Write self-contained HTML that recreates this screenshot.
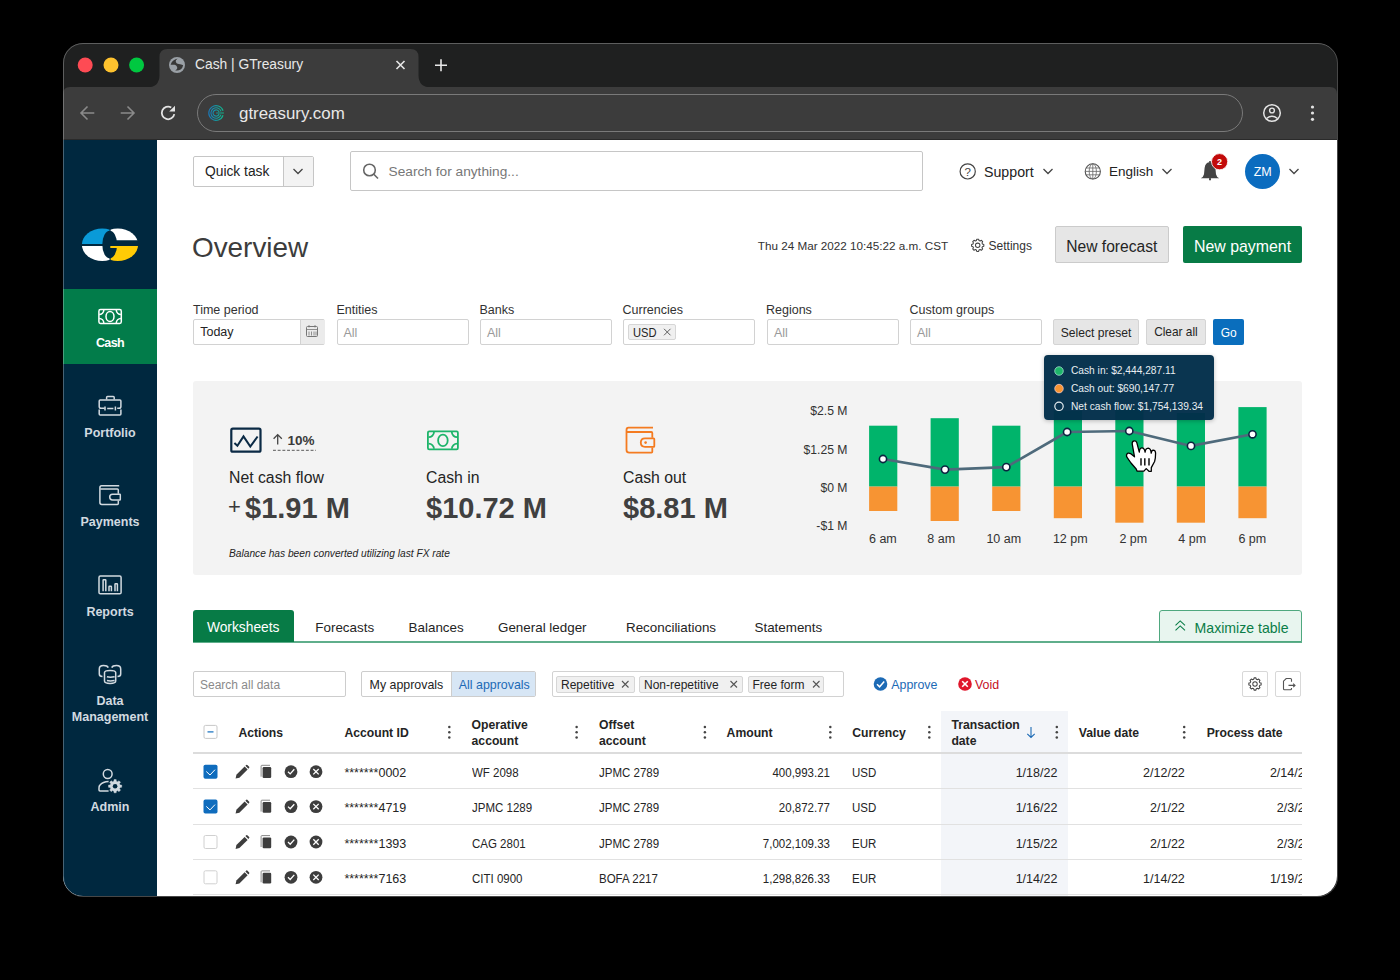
<!DOCTYPE html>
<html><head><meta charset="utf-8">
<style>
*{margin:0;padding:0;box-sizing:border-box}
html,body{width:1400px;height:980px;background:#000;overflow:hidden;font-family:"Liberation Sans",sans-serif}
.a{position:absolute}
.t{position:absolute;white-space:nowrap;line-height:1}
#win{position:absolute;left:0;top:0;width:1400px;height:980px;clip-path:inset(43px 63px 84px 63px round 20px);background:#1f2020}
svg{position:absolute;overflow:visible}
</style></head><body>
<div id="win">
  <!-- tab bar -->
  <div class="a" style="left:63px;top:43px;width:1274px;height:44px;background:#1f2020"></div>
  <!-- active tab -->
  <svg style="left:0;top:0" width="1400" height="140" viewBox="0 0 1400 140">
    <path d="M146.5 87.5 Q159.5 87.5 159.5 75 V57 Q159.5 49 167.5 49 H410.5 Q418.5 49 418.5 57 V75 Q418.5 87.5 431.5 87.5 Z" fill="#3c3c3c"/>
    <!-- toolbar -->
    <path d="M63 94 Q63 87 70 87 H1330 Q1337 87 1337 94 V140 H63 Z" fill="#3c3c3c"/>
    <!-- traffic -->
    <circle cx="85.2" cy="65" r="7.5" fill="#fe4b54"/>
    <circle cx="111" cy="65" r="7.5" fill="#fec22e"/>
    <circle cx="136.6" cy="65" r="7.5" fill="#00c840"/>
    <!-- globe -->
    <circle cx="177" cy="65" r="8" fill="#9aa0a6"/>
    <path transform="translate(177 65) scale(1.12) translate(-177 -65)" d="M171.3 64.7 Q172.5 60.5 177.5 59.3 Q175.5 60.8 175.9 62.3 Q176.6 64 178.6 64.2 Q181 64.5 182.5 65.3 Q182 68 180.2 69 Q178 70.3 175.4 69.8 Q177.8 68.5 177.2 66.9 Q176.5 64.9 174.9 64.7 Z" fill="#383838"/>
    <!-- tab close -->
    <path d="M396.5 61 L404.5 69 M404.5 61 L396.5 69" stroke="#e8e8e8" stroke-width="1.6"/>
    <!-- plus -->
    <path d="M435 65.3 H447 M441 59.3 V71.3" stroke="#e8e8e8" stroke-width="1.6"/>
    <!-- back/fwd -->
    <path d="M94.3 113 H81 M87.5 106.5 L81 113 L87.5 119.5" stroke="#8a8a8a" stroke-width="1.6" fill="none"/>
    <path d="M120.7 113 H134 M127.5 106.5 L134 113 L127.5 119.5" stroke="#8a8a8a" stroke-width="1.6" fill="none"/>
    <!-- reload -->
    <path d="M174.3 114.1 A6.3 6.3 0 1 1 171.25 107.5" stroke="#e3e3e3" stroke-width="1.8" fill="none"/>
    <path d="M175 105.8 V111.6 H169.2 Z" fill="#e3e3e3"/>
    <!-- address bar -->
    <rect x="197.5" y="94.5" width="1045" height="37" rx="18.5" fill="#3c3c3c" stroke="#7a7a7a" stroke-width="1"/>
    <!-- favicon -->
    <defs><linearGradient id="fg" x1="0" x2="1" y1="0" y2="0"><stop offset="0" stop-color="#1a78b8"/><stop offset="1" stop-color="#10b98a"/></linearGradient></defs>
    <path d="M223.04 115.26 A7.3 7.3 0 1 1 223.04 110.74 M221.05 114.61 A5.2 5.2 0 1 1 221.05 111.39 M219.05 113.96 A3.1 3.1 0 1 1 219.05 112.04 M216.1 113 H223.9" stroke="url(#fg)" stroke-width="1.15" fill="none"/>
    <!-- profile -->
    <circle cx="1272" cy="113" r="8.3" stroke="#e3e3e3" stroke-width="1.5" fill="none"/>
    <circle cx="1272" cy="110.5" r="2.4" stroke="#e3e3e3" stroke-width="1.4" fill="none"/>
    <path d="M1266.5 118.5 Q1272 114 1277.5 118.5" stroke="#e3e3e3" stroke-width="1.4" fill="none"/>
    <!-- kebab -->
    <circle cx="1312.5" cy="107" r="1.6" fill="#e3e3e3"/>
    <circle cx="1312.5" cy="113" r="1.6" fill="#e3e3e3"/>
    <circle cx="1312.5" cy="119.3" r="1.6" fill="#e3e3e3"/>
  </svg>
  <div class="t" style="left:195px;top:58px;font-size:13.8px;color:#e8e8e8">Cash | GTreasury</div>
  <div class="t" style="left:239px;top:105.5px;font-size:16.9px;color:#e8e8e8">gtreasury.com</div>
  <div class="a" style="left:63px;top:139px;width:1274px;height:1px;background:#2a2a2a"></div>

  <div class="a" style="left:63px;top:140px;width:1274px;height:756px;background:#fff"></div>
  <!-- sidebar -->
  <div class="a" style="left:63px;top:140px;width:94px;height:756px;background:#00283f"></div>
  <div class="a" style="left:63px;top:289px;width:94px;height:75px;background:#027c4a"></div>


  <svg style="left:0;top:0" width="160" height="900" viewBox="0 0 160 900">
    <!-- logo -->
    <defs>
      <clipPath id="lgL"><rect x="70" y="220" width="39.6" height="24"/></clipPath>
      <clipPath id="lgL2"><rect x="70" y="246" width="39.6" height="24"/></clipPath>
      <clipPath id="lgR"><rect x="110.6" y="220" width="40" height="20.2"/></clipPath>
      <clipPath id="lgR2"><rect x="110.6" y="246" width="40" height="24"/></clipPath>
    </defs>
    <ellipse cx="102.2" cy="244.7" rx="20.3" ry="16.2" fill="#0a9ad8" clip-path="url(#lgL)"/>
    <ellipse cx="102.2" cy="244.7" rx="20.3" ry="16.2" fill="#ffffff" clip-path="url(#lgL2)"/>
    <ellipse cx="117.8" cy="244.7" rx="20.3" ry="16.2" fill="#ffffff" clip-path="url(#lgR)"/>
    <ellipse cx="117.8" cy="244.7" rx="20.3" ry="16.2" fill="#ffcb05" clip-path="url(#lgR2)"/>
    <ellipse cx="109.7" cy="244.6" rx="7.4" ry="13.8" fill="#00283f"/>
    <path d="M110.3 245.9 H118.5 L117.6 248 H110.3 Z" fill="#ffcb05"/>
    <g stroke="#fff" stroke-width="1.5" fill="none">
      <!-- cash -->
      <rect x="98.9" y="309.6" width="22.4" height="13.8" rx="1.6"/>
      <ellipse cx="110" cy="316.5" rx="4" ry="5"/>
      <path d="M103.8 310 A4.6 4.6 0 0 1 99.2 314.6 M116.3 310 A4.6 4.6 0 0 0 120.9 314.6 M103.8 323 A4.6 4.6 0 0 0 99.2 318.4 M116.3 323 A4.6 4.6 0 0 1 120.9 318.4"/>
    </g>
    <g stroke="#d2dae0" stroke-width="1.5" fill="none">
      <!-- portfolio -->
      <path d="M106.6 399.6 V397.5 Q106.6 396.6 107.5 396.6 H113.3 Q114.2 396.6 114.2 397.5 V399.6"/>
      <path d="M104.6 408.3 H101 Q99.2 408.3 99.2 406.5 V401 Q99.2 400 100.2 400 H119.9 Q120.9 400 120.9 401 V406.5 Q120.9 408.3 119.1 408.3 H117.2"/>
      <path d="M99.2 409.6 V414 Q99.2 415 100.2 415 H119.9 Q120.9 415 120.9 414 V409.6"/>
      <path d="M105 406.4 V410.6 M115.4 406.4 V410.6 M107.2 408.4 H113.4"/>
      <!-- payments -->
      <path d="M119.2 485.8 H101.5 Q99.9 485.8 99.9 487.7 V502.6 Q99.9 504.5 101.8 504.5 H117.4 Q118.3 504.5 118.3 503.6 V500.5"/>
      <path d="M100.3 489 H117.4 Q118.3 489 118.3 490 V493.8"/>
      <path d="M112.5 494.2 H119.7 Q120.3 494.2 120.3 494.8 V499.4 Q120.3 500 119.7 500 H112.5 Q109.7 500 109.7 497.1 Q109.7 494.2 112.5 494.2 Z"/>
      <!-- reports -->
      <rect x="99" y="576.1" width="22.1" height="17.7" rx="1.4"/>
      <path d="M103.1 591.2 V580.3 Q103.1 579.8 103.6 579.8 H105.3 Q105.8 579.8 105.8 580.3 V591.2"/>
      <path d="M109 591.2 V586.8 Q109 586.3 109.5 586.3 H110.9 Q111.4 586.3 111.4 586.8 V591.2"/>
      <path d="M115 591.2 V584.3 Q115 583.8 115.5 583.8 H116.9 Q117.4 583.8 117.4 584.3 V591.2"/>
      <!-- data mgmt -->
      <path d="M108.3 667.6 Q107.5 665.6 103.5 665.6 Q99.3 665.6 99.3 669 V674 Q99.3 676.5 102.5 676.6"/>
      <path d="M111.7 667.6 Q112.5 665.6 116.5 665.6 Q120.7 665.6 120.7 669 V674 Q120.7 676.5 117.5 676.6"/>
      <path d="M104.5 672.6 Q104.5 670.4 110.1 670.4 Q115.7 670.4 115.7 672.6 V681 Q115.7 683.4 110.1 683.4 Q104.5 683.4 104.5 681 Z"/>
      <path d="M106.9 676.7 Q110.1 677.6 114.6 676.7 M106.9 680.6 Q110.1 681.4 114.6 680.6"/>
      <!-- admin -->
      <circle cx="107.7" cy="774" r="4.4"/>
      <path d="M108.6 781.6 Q103 781.6 99.6 785.5 Q99 786.5 99 788 V790 Q99 790.9 100 790.9 H108.6"/>
    </g>
    <!-- admin gear -->
    <g transform="translate(115.1 786.2)">
      <path fill="#d2dae0" stroke="#d2dae0" stroke-width="0.4" stroke-linejoin="round" d="M-1.23 -4.95 L-1.10 -6.61 L1.10 -6.61 L1.23 -4.95 L2.63 -4.37 L3.90 -5.45 L5.45 -3.90 L4.37 -2.63 L4.95 -1.23 L6.61 -1.10 L6.61 1.10 L4.95 1.23 L4.37 2.63 L5.45 3.90 L3.90 5.45 L2.63 4.37 L1.23 4.95 L1.10 6.61 L-1.10 6.61 L-1.23 4.95 L-2.63 4.37 L-3.90 5.45 L-5.45 3.90 L-4.37 2.63 L-4.95 1.23 L-6.61 1.10 L-6.61 -1.10 L-4.95 -1.23 L-4.37 -2.63 L-5.45 -3.90 L-3.90 -5.45 L-2.63 -4.37 Z"/>
      <circle r="2.3" fill="#00283f"/>
    </g>
  </svg>
  <div class="t" style="left:63px;width:94px;text-align:center;top:337.0px;font-size:12.5px;font-weight:bold;color:#fff;letter-spacing:-0.6px">Cash</div>
  <div class="t" style="left:63px;width:94px;text-align:center;top:426.5px;font-size:12.5px;font-weight:bold;color:#d2dae0">Portfolio</div>
  <div class="t" style="left:63px;width:94px;text-align:center;top:516.0px;font-size:12.5px;font-weight:bold;color:#d2dae0">Payments</div>
  <div class="t" style="left:63px;width:94px;text-align:center;top:605.5px;font-size:12.5px;font-weight:bold;color:#d2dae0">Reports</div>
  <div class="t" style="left:63px;width:94px;text-align:center;top:695.0px;font-size:12.5px;font-weight:bold;color:#d2dae0">Data</div>
  <div class="t" style="left:63px;width:94px;text-align:center;top:711.1px;font-size:12.5px;font-weight:bold;color:#d2dae0">Management</div>
  <div class="t" style="left:63px;width:94px;text-align:center;top:801.0px;font-size:12.5px;font-weight:bold;color:#d2dae0">Admin</div>



  <!-- quick task -->
  <div class="a" style="left:193px;top:156px;width:121px;height:31px;border:1px solid #c6c6c6;border-radius:2px;background:#fff"></div>
  <div class="a" style="left:283px;top:157px;width:30px;height:29px;border-left:1px solid #c6c6c6;background:#f3f3f3"></div>
  <div class="t" style="left:205px;top:165.1px;font-size:13.8px;color:#222">Quick task</div>
  <!-- search -->
  <div class="a" style="left:350px;top:151px;width:573px;height:40px;border:1px solid #c6c6c6;border-radius:2px"></div>
  <div class="t" style="left:388.6px;top:165.1px;font-size:13.7px;color:#777">Search for anything...</div>
  <div class="t" style="left:984px;top:165.1px;font-size:14.2px;color:#222">Support</div>
  <div class="t" style="left:1109px;top:165.1px;font-size:13.5px;color:#222">English</div>
  <div class="a" style="left:1245px;top:153.7px;width:35.4px;height:35.4px;border-radius:50%;background:#0b6cbf"></div>
  <div class="t" style="left:1245px;width:35.4px;text-align:center;top:166.3px;font-size:12.5px;color:#fff">ZM</div>
  <svg style="left:0;top:0" width="1400" height="280" viewBox="0 0 1400 280">
    <g fill="none" stroke="#444" stroke-width="1.3">
      <path d="M293.5 169 L298 173.5 L302.5 169"/>
      <circle cx="369.5" cy="170" r="5.8" stroke="#666" stroke-width="1.6"/>
      <path d="M373.8 174.3 L378 178.5" stroke="#666" stroke-width="1.6"/>
      <circle cx="967.7" cy="171.4" r="7.6" stroke="#444" stroke-width="1.2"/>
      <path d="M1043.5 169 L1048 173.5 L1052.5 169"/>
      <circle cx="1092.8" cy="171.4" r="7.6" stroke="#555" stroke-width="1.1"/>
      <ellipse cx="1092.8" cy="171.4" rx="3.6" ry="7.6" stroke="#666" stroke-width="0.8"/>
      <path d="M1085.2 171.4 H1100.4 M1086.2 168 H1099.4 M1086.2 174.8 H1099.4 M1092.8 163.8 V179" stroke="#666" stroke-width="0.8"/>
      <path d="M1162.5 169 L1167 173.5 L1171.5 169"/>
      <path d="M1289.5 169 L1294 173.5 L1298.5 169"/>
    </g>
    <text x="967.7" y="175.8" font-family="Liberation Sans" font-size="11.5" fill="#444" text-anchor="middle">?</text>
    <!-- bell -->
    <path d="M1210 162.3 Q1205.2 162.3 1204.6 168 L1204 174.2 Q1203.5 176.8 1200.8 178.3 H1219.2 Q1216.5 176.8 1216 174.2 L1215.4 168 Q1214.8 162.3 1210 162.3 Z" fill="#444"/>
    <rect x="1209" y="178" width="2" height="2.4" rx="0.8" fill="#444"/>
    <circle cx="1210" cy="162" r="1.1" fill="#444"/>
    <circle cx="1219.6" cy="161.7" r="8.1" fill="#c20a0a" stroke="#fff" stroke-width="0.8"/>
    <text x="1219.6" y="165" font-family="Liberation Sans" font-size="9" font-weight="bold" fill="#fff" text-anchor="middle">2</text>
    <!-- settings gear -->
    <g transform="translate(977.7 245.3)" fill="none" stroke="#444" stroke-width="1.05">
      <path stroke-linejoin="round" d="M-1.33 -4.72 L-0.92 -6.13 L0.92 -6.13 L1.33 -4.72 L2.39 -4.28 L3.68 -4.99 L4.99 -3.68 L4.28 -2.39 L4.72 -1.33 L6.13 -0.92 L6.13 0.92 L4.72 1.33 L4.28 2.39 L4.99 3.68 L3.68 4.99 L2.39 4.28 L1.33 4.72 L0.92 6.13 L-0.92 6.13 L-1.33 4.72 L-2.39 4.28 L-3.68 4.99 L-4.99 3.68 L-4.28 2.39 L-4.72 1.33 L-6.13 0.92 L-6.13 -0.92 L-4.72 -1.33 L-4.28 -2.39 L-4.99 -3.68 L-3.68 -4.99 L-2.39 -4.28 Z"/>
      <circle r="2.2"/>
    </g>
  </svg>
  <div class="t" style="left:192px;top:233.2px;font-size:28.3px;color:#3c3c3c;transform:scaleX(0.985);transform-origin:left center">Overview</div>
  <div class="t" style="left:757.8px;top:240.3px;font-size:11.7px;color:#323232">Thu 24 Mar 2022 10:45:22 a.m. CST</div>
  <div class="t" style="left:988.6px;top:240.2px;font-size:12px;color:#323232">Settings</div>
  <div class="a" style="left:1055px;top:226.3px;width:113.6px;height:37.1px;background:#e6e6e6;border:1px solid #cbcbcb;border-radius:2px"></div>
  <div class="t" style="left:1055px;width:113.6px;text-align:center;top:238.9px;font-size:15.6px;color:#242424">New forecast</div>
  <div class="a" style="left:1183px;top:226.3px;width:119px;height:37.1px;background:#077b46;border-radius:2px"></div>
  <div class="t" style="left:1183px;width:119px;text-align:center;top:238.9px;font-size:15.9px;color:#fff">New payment</div>



  <div class="t" style="left:193px;top:303.6px;font-size:12.5px;color:#323232">Time period</div>
  <div class="t" style="left:336.5px;top:303.6px;font-size:12.5px;color:#323232">Entities</div>
  <div class="t" style="left:479.5px;top:303.6px;font-size:12.5px;color:#323232">Banks</div>
  <div class="t" style="left:622.5px;top:303.6px;font-size:12.5px;color:#323232">Currencies</div>
  <div class="t" style="left:766px;top:303.6px;font-size:12.5px;color:#323232">Regions</div>
  <div class="t" style="left:909.5px;top:303.6px;font-size:12.5px;color:#323232">Custom groups</div>
  <div class="a" style="left:193px;top:319px;width:132.4px;height:26px;border:1px solid #d2d2d2;border-radius:2px"></div>
  <div class="a" style="left:299.5px;top:320px;width:25px;height:24px;border-left:1px solid #d2d2d2;background:#ebebeb"></div>
  <div class="a" style="left:336.8px;top:319px;width:132.4px;height:26px;border:1px solid #d2d2d2;border-radius:2px"></div>
  <div class="a" style="left:480px;top:319px;width:132.4px;height:26px;border:1px solid #d2d2d2;border-radius:2px"></div>
  <div class="a" style="left:623px;top:319px;width:132.4px;height:26px;border:1px solid #d2d2d2;border-radius:2px"></div>
  <div class="a" style="left:767px;top:319px;width:132.4px;height:26px;border:1px solid #d2d2d2;border-radius:2px"></div>
  <div class="a" style="left:910px;top:319px;width:132.4px;height:26px;border:1px solid #d2d2d2;border-radius:2px"></div>
  <div class="t" style="left:200.2px;top:326px;font-size:12.5px;color:#242424">Today</div>
  <div class="t" style="left:343.5px;top:326.8px;font-size:12.5px;color:#9a9a9a">All</div>
  <div class="t" style="left:487px;top:326.8px;font-size:12.5px;color:#9a9a9a">All</div>
  <div class="t" style="left:774px;top:326.8px;font-size:12.5px;color:#9a9a9a">All</div>
  <div class="t" style="left:917px;top:326.8px;font-size:12.5px;color:#9a9a9a">All</div>
  <div class="a" style="left:628px;top:323.9px;width:48px;height:16.5px;border:1px solid #d6d6d6;border-radius:2px;background:#f0f0f0"></div>
  <div class="t" style="left:632.8px;top:326.8px;font-size:12.4px;color:#242424;transform:scaleX(0.9);transform-origin:left center">USD</div>
  <div class="a" style="left:1053.4px;top:318.5px;width:85.3px;height:26.3px;background:#e6e6e6;border:1px solid #d4d4d4;border-radius:2px"></div>
  <div class="t" style="left:1053.4px;width:85.3px;text-align:center;top:326.5px;font-size:12.1px;color:#242424">Select preset</div>
  <div class="a" style="left:1146.3px;top:318.5px;width:59.3px;height:26.3px;background:#e6e6e6;border:1px solid #d4d4d4;border-radius:2px"></div>
  <div class="t" style="left:1146.3px;width:59.3px;text-align:center;top:327.3px;font-size:11.9px;color:#242424">Clear all</div>
  <div class="a" style="left:1213px;top:318.5px;width:31.4px;height:26.3px;background:#0a6ebd;border-radius:2px"></div>
  <div class="t" style="left:1213px;width:31.4px;text-align:center;top:326.6px;font-size:12px;color:#fff">Go</div>
  <svg style="left:0;top:0" width="1400" height="360" viewBox="0 0 1400 360">
    <g fill="none" stroke="#777" stroke-width="1">
      <rect x="306.5" y="326.5" width="11" height="10" rx="1"/>
      <path d="M306.5 329.5 H317.5 M309 325 V327.5 M315 325 V327.5 M309 331.5 V335.5 M311.5 331.5 V335.5 M314 331.5 V335.5 M316 331.5 V335.5" stroke-width="0.8"/>
      <path d="M664 328.8 L670.5 335.3 M670.5 328.8 L664 335.3" stroke="#555" stroke-width="0.95"/>
    </g>
  </svg>



  <div class="a" style="left:193px;top:381px;width:1109px;height:193.5px;background:#f3f3f3;border-radius:3px"></div>
  <svg style="left:0;top:0" width="1400" height="600" viewBox="0 0 1400 600">
    <rect x="231.3" y="428.7" width="29.2" height="23" rx="1.5" fill="none" stroke="#0b2a45" stroke-width="2.2"/>
    <path d="M234.4 443 L237.4 445.7 L243.5 436.4 L250.3 446.5 L257.6 436.5" fill="none" stroke="#0b2a45" stroke-width="2"/>
    <path d="M277.7 444.5 V434.8 M273.6 438.8 L277.7 434.6 L281.8 438.8" fill="none" stroke="#444" stroke-width="1.3"/>
    <path d="M273 450.3 H316" stroke="#777" stroke-width="1.2" stroke-dasharray="2.9 1.8"/>
    <!-- cash in icon -->
    <g fill="none" stroke="#1db46a" stroke-width="1.8">
      <rect x="427.9" y="431.4" width="30" height="18" rx="1.3"/>
      <ellipse cx="442.9" cy="440.4" rx="4.8" ry="5.8"/>
      <path d="M434 432 A5.3 5.3 0 0 1 428.5 437.2 M451.8 432 A5.3 5.3 0 0 0 457.3 437.2 M434 448.8 A5.3 5.3 0 0 0 428.5 443.6 M451.8 448.8 A5.3 5.3 0 0 1 457.3 443.6"/>
    </g>
    <!-- cash out wallet -->
    <g fill="none" stroke="#f47b20" stroke-width="1.8">
      <path d="M653 427.6 H628.5 Q626.5 427.6 626.5 430 V450 Q626.5 452.7 629.3 452.7 H651.5 Q652.3 452.7 652.3 451.8 V447.5"/>
      <path d="M627 432 H651.3 Q652.3 432 652.3 433 V437.8"/>
      <path d="M645 438.3 H653.6 Q654.3 438.3 654.3 439 V446.2 Q654.3 446.9 653.6 446.9 H645 Q640.8 446.9 640.8 442.6 Q640.8 438.3 645 438.3 Z"/>
    </g>
    <circle cx="645.6" cy="442.6" r="1.3" fill="#f47b20"/>
  </svg>
  <div class="t" style="left:287.5px;top:433.7px;font-size:13.5px;font-weight:bold;color:#3a3a3a">10%</div>
  <div class="t" style="left:229px;top:469.6px;font-size:15.8px;color:#242424">Net cash flow</div>
  <div class="t" style="left:426px;top:469.6px;font-size:15.8px;color:#242424">Cash in</div>
  <div class="t" style="left:623px;top:469.6px;font-size:15.8px;color:#242424">Cash out</div>
  <div class="t" style="left:228px;top:496px;font-size:22px;color:#3a3a3a">+</div>
  <div class="t" style="left:245px;top:493.8px;font-size:29px;font-weight:bold;color:#404040">$1.91 M</div>
  <div class="t" style="left:426px;top:493.8px;font-size:29px;font-weight:bold;color:#404040">$10.72 M</div>
  <div class="t" style="left:623px;top:493.8px;font-size:29px;font-weight:bold;color:#404040">$8.81 M</div>
  <div class="t" style="left:229px;top:548.9px;font-size:10.2px;font-style:italic;color:#242424">Balance has been converted utilizing last FX rate</div>
  <svg style="left:0;top:0" width="1400" height="600" viewBox="0 0 1400 600">
    <rect x="869.1" y="425.7" width="28.2" height="60.9" fill="#00b46b"/>
    <rect x="869.1" y="486.6" width="28.2" height="24.4" fill="#f79433"/>
    <rect x="930.6" y="418.2" width="28.2" height="68.4" fill="#00b46b"/>
    <rect x="930.6" y="486.6" width="28.2" height="34.4" fill="#f79433"/>
    <rect x="992.2" y="425.7" width="28.2" height="60.9" fill="#00b46b"/>
    <rect x="992.2" y="486.6" width="28.2" height="24.4" fill="#f79433"/>
    <rect x="1053.8" y="410.6" width="28.2" height="76.0" fill="#00b46b"/>
    <rect x="1053.8" y="486.6" width="28.2" height="31.6" fill="#f79433"/>
    <rect x="1115.3" y="408" width="28.2" height="78.6" fill="#00b46b"/>
    <rect x="1115.3" y="486.6" width="28.2" height="36.1" fill="#f79433"/>
    <rect x="1176.8" y="413" width="28.2" height="73.6" fill="#00b46b"/>
    <rect x="1176.8" y="486.6" width="28.2" height="36.1" fill="#f79433"/>
    <rect x="1238.4" y="407.1" width="28.2" height="79.5" fill="#00b46b"/>
    <rect x="1238.4" y="486.6" width="28.2" height="31.6" fill="#f79433"/>
    <path d="M883 459 L945 469.6 L1006.3 467.1 L1067.1 432 L1129.3 431 L1191 445.9 L1252.5 434.3" fill="none" stroke="#4e6a7b" stroke-width="2.6" stroke-linejoin="round"/>
    <circle cx="883" cy="459" r="3.6" fill="#fff" stroke="#0a2540" stroke-width="1.6"/>
    <circle cx="945" cy="469.6" r="3.6" fill="#fff" stroke="#0a2540" stroke-width="1.6"/>
    <circle cx="1006.3" cy="467.1" r="3.6" fill="#fff" stroke="#0a2540" stroke-width="1.6"/>
    <circle cx="1067.1" cy="432" r="3.6" fill="#fff" stroke="#0a2540" stroke-width="1.6"/>
    <circle cx="1129.3" cy="431" r="3.6" fill="#fff" stroke="#0a2540" stroke-width="1.6"/>
    <circle cx="1191" cy="445.9" r="3.6" fill="#fff" stroke="#0a2540" stroke-width="1.6"/>
    <circle cx="1252.5" cy="434.3" r="3.6" fill="#fff" stroke="#0a2540" stroke-width="1.6"/>
  </svg>
  <div class="t" style="left:747.5px;width:100px;text-align:right;top:405.4px;font-size:12.2px;color:#323232">$2.5 M</div>
  <div class="t" style="left:747.5px;width:100px;text-align:right;top:443.9px;font-size:12.2px;color:#323232">$1.25 M</div>
  <div class="t" style="left:747.5px;width:100px;text-align:right;top:482.3px;font-size:12.2px;color:#323232">$0 M</div>
  <div class="t" style="left:747.5px;width:100px;text-align:right;top:520.3px;font-size:12.2px;color:#323232">-$1 M</div>
  <div class="t" style="left:842.9px;width:80px;text-align:center;top:533.3px;font-size:12.5px;color:#323232">6 am</div>
  <div class="t" style="left:901.2px;width:80px;text-align:center;top:533.3px;font-size:12.5px;color:#323232">8 am</div>
  <div class="t" style="left:963.8px;width:80px;text-align:center;top:533.3px;font-size:12.5px;color:#323232">10 am</div>
  <div class="t" style="left:1030.3px;width:80px;text-align:center;top:533.3px;font-size:12.5px;color:#323232">12 pm</div>
  <div class="t" style="left:1093.3px;width:80px;text-align:center;top:533.3px;font-size:12.5px;color:#323232">2 pm</div>
  <div class="t" style="left:1152.2px;width:80px;text-align:center;top:533.3px;font-size:12.5px;color:#323232">4 pm</div>
  <div class="t" style="left:1212.3px;width:80px;text-align:center;top:533.3px;font-size:12.5px;color:#323232">6 pm</div>

  <div class="a" style="left:1044.4px;top:355.4px;width:170px;height:65px;background:rgba(2,46,74,0.97);border-radius:4px;box-shadow:0 1px 4px rgba(0,0,0,0.25)"></div>
  <svg style="left:0;top:0" width="1400" height="600" viewBox="0 0 1400 600">
    <circle cx="1059" cy="371" r="4.3" fill="#1db46a" stroke="#cfe" stroke-width="0.6"/>
    <circle cx="1059" cy="388.6" r="4.3" fill="#f79433" stroke="#fde" stroke-width="0.6"/>
    <circle cx="1059" cy="406.3" r="4.2" fill="none" stroke="#e8eef2" stroke-width="1.2"/>
  </svg>
  <div class="t" style="left:1071px;top:365.5px;font-size:10.2px;color:#e8eef2">Cash in: $2,444,287.11</div>
  <div class="t" style="left:1071px;top:383.7px;font-size:10.2px;color:#e8eef2">Cash out: $690,147.77</div>
  <div class="t" style="left:1071px;top:401.7px;font-size:10.2px;color:#e8eef2">Net cash flow: $1,754,139.34</div>
  <svg style="left:0;top:0" width="1400" height="600" viewBox="0 0 1400 600">
    <path d="M1134.3 440.8 Q1132 441 1132.2 443.8 L1134.5 456.8 L1130.5 453.6 Q1127.6 452 1126.5 455 Q1126.3 456.4 1127.4 457.8 L1131 463 L1136.2 469 L1137 471.1 H1143.9 L1146.2 468.6 L1149 471.3 H1151.3 V467.6 L1154.6 461.5 Q1155.6 458 1155.6 453 Q1155.3 450.2 1153.2 450.2 Q1151.5 450.4 1151.2 453.2 Q1150.8 448.4 1148.2 448.2 Q1145.4 448.4 1145.1 452.2 Q1144.4 447.8 1141.8 447.9 Q1139.4 448.2 1139.3 452.2 L1136.8 442.6 Q1136.2 440.7 1134.3 440.8 Z" fill="#fff" stroke="#000" stroke-width="1.3" stroke-linejoin="round"/>
    <path d="M1141 458.2 V465.6 M1144.8 458.2 V465.6 M1149 458.2 V465.6" stroke="#111" stroke-width="1.5"/>
  </svg>




  <div class="a" style="left:193px;top:641px;width:1109px;height:1.6px;background:#5fae8b"></div>
  <div class="a" style="left:192.7px;top:610.3px;width:101px;height:32px;background:#077b46;border-radius:3px 3px 0 0"></div>
  <div class="t" style="left:192.7px;width:101px;text-align:center;top:620.8px;font-size:13.8px;color:#fff">Worksheets</div>
  <div class="t" style="left:315.3px;top:620.8px;font-size:13.4px;color:#242424">Forecasts</div>
  <div class="t" style="left:408.6px;top:620.8px;font-size:13.4px;color:#242424">Balances</div>
  <div class="t" style="left:498px;top:620.8px;font-size:13.4px;color:#242424">General ledger</div>
  <div class="t" style="left:626px;top:620.8px;font-size:13.4px;color:#242424">Reconciliations</div>
  <div class="t" style="left:754.5px;top:620.8px;font-size:13.4px;color:#242424">Statements</div>
  <div class="a" style="left:1159.3px;top:610.2px;width:142.4px;height:32.2px;background:#e8f5ef;border:1.5px solid #4fa87f;border-radius:3px 3px 0 0"></div>
  <div class="t" style="left:1194.6px;top:620.8px;font-size:14.1px;color:#0a7d48">Maximize table</div>
  <!-- toolbar row -->
  <div class="a" style="left:193px;top:670.7px;width:153.4px;height:26.5px;border:1px solid #cdcdcd;border-radius:2px"></div>
  <div class="t" style="left:200px;top:678.6px;font-size:12px;color:#8a8a8a">Search all data</div>
  <div class="a" style="left:361.4px;top:670.7px;width:175px;height:26.5px;border:1px solid #cdcdcd;border-radius:2px"></div>
  <div class="a" style="left:451px;top:671.7px;width:84.4px;height:24.5px;background:#d7e6f5;border-left:1px solid #cdcdcd"></div>
  <div class="t" style="left:369.6px;top:678.6px;font-size:12.4px;color:#242424">My approvals</div>
  <div class="t" style="left:458.8px;top:678.6px;font-size:12.4px;color:#1c6ab5">All approvals</div>
  <div class="a" style="left:551.5px;top:670.7px;width:292.8px;height:26.3px;border:1px solid #d2d2d2;border-radius:2px"></div>
  <div class="a" style="left:555.8px;top:675.7px;width:78.9px;height:17.1px;background:#f0f0f0;border:1px solid #d6d6d6;border-radius:2px"></div>
  <div class="a" style="left:638.7px;top:675.7px;width:104.6px;height:17.1px;background:#f0f0f0;border:1px solid #d6d6d6;border-radius:2px"></div>
  <div class="a" style="left:747.9px;top:675.7px;width:76.6px;height:17.1px;background:#f0f0f0;border:1px solid #d6d6d6;border-radius:2px"></div>
  <div class="t" style="left:561px;top:679.2px;font-size:12px;color:#242424">Repetitive</div>
  <div class="t" style="left:644px;top:679.2px;font-size:12px;color:#242424">Non-repetitive</div>
  <div class="t" style="left:752.5px;top:679.2px;font-size:12px;color:#242424">Free form</div>
  <div class="t" style="left:891.3px;top:678.6px;font-size:12.4px;color:#1c6ab5">Approve</div>
  <div class="t" style="left:975px;top:678.6px;font-size:12.4px;color:#c50f1f">Void</div>
  <div class="a" style="left:1242px;top:671px;width:26px;height:26px;border:1px solid #d8d8d8;border-radius:2px"></div>
  <div class="a" style="left:1275.3px;top:671px;width:26.2px;height:26px;border:1px solid #d8d8d8;border-radius:2px"></div>
  <svg style="left:0;top:0" width="1400" height="720" viewBox="0 0 1400 720">
    <path d="M1175.5 625.4 L1180.2 620.9 L1185 625.4 M1175.5 630.4 L1180.2 625.9 L1185 630.4" fill="none" stroke="#0a7d48" stroke-width="1.1"/>
    <g stroke="#555" stroke-width="1.1">
      <path d="M622 681 L628.5 687.5 M628.5 681 L622 687.5"/>
      <path d="M730.5 681 L737 687.5 M737 681 L730.5 687.5"/>
      <path d="M813 681 L819.5 687.5 M819.5 681 L813 687.5"/>
    </g>
    <circle cx="880.5" cy="684" r="6.8" fill="#1c6ab5"/>
    <path d="M877 684.2 L879.6 686.8 L884.2 681.6" fill="none" stroke="#fff" stroke-width="1.5"/>
    <circle cx="965" cy="684" r="6.8" fill="#e0162b"/>
    <path d="M962.2 681.2 L967.8 686.8 M967.8 681.2 L962.2 686.8" fill="none" stroke="#fff" stroke-width="1.6"/>
    <g transform="translate(1255 684)" fill="none" stroke="#444" stroke-width="1.05">
      <path stroke-linejoin="round" d="M-1.33 -4.72 L-0.92 -6.13 L0.92 -6.13 L1.33 -4.72 L2.39 -4.28 L3.68 -4.99 L4.99 -3.68 L4.28 -2.39 L4.72 -1.33 L6.13 -0.92 L6.13 0.92 L4.72 1.33 L4.28 2.39 L4.99 3.68 L3.68 4.99 L2.39 4.28 L1.33 4.72 L0.92 6.13 L-0.92 6.13 L-1.33 4.72 L-2.39 4.28 L-3.68 4.99 L-4.99 3.68 L-4.28 2.39 L-4.72 1.33 L-6.13 0.92 L-6.13 -0.92 L-4.72 -1.33 L-4.28 -2.39 L-4.99 -3.68 L-3.68 -4.99 L-2.39 -4.28 Z"/>
      <circle r="2.2"/>
    </g>
    <g fill="none" stroke="#555" stroke-width="1.1">
      <path d="M1291.5 681.8 V679.5 Q1291.5 678.5 1290.5 678.5 H1286.2 L1283.5 681.2 V688.8 Q1283.5 689.8 1284.5 689.8 H1290.5 Q1291.5 689.8 1291.5 688.8 V688"/>
      <path d="M1288.5 685.4 H1295 M1293.2 683.6 L1295 685.4 L1293.2 687.2"/>
    </g>
  </svg>


  <!-- TABLE_START -->
  <div class="a" style="left:940.8px;top:711.4px;width:126.8px;height:190px;background:#f3f5f9"></div>
  <div class="a" style="left:193px;top:752.3px;width:1109px;height:1.4px;background:#dcdcdc"></div>
  <div class="a" style="left:193px;top:788.0px;width:1109px;height:1.3px;background:#e1e1e1"></div>
  <div class="a" style="left:193px;top:823.6px;width:1109px;height:1.3px;background:#e1e1e1"></div>
  <div class="a" style="left:193px;top:858.7px;width:1109px;height:1.3px;background:#e1e1e1"></div>
  <div class="a" style="left:193px;top:894.0px;width:1109px;height:1.3px;background:#e1e1e1"></div>
  <div class="t" style="left:238.4px;top:727.1px;font-size:12.2px;font-weight:bold;color:#242424">Actions</div>
  <div class="t" style="left:344.4px;top:727.1px;font-size:12.2px;font-weight:bold;color:#242424">Account ID</div>
  <div class="t" style="left:471.6px;top:719.1px;font-size:12.2px;font-weight:bold;color:#242424">Operative</div>
  <div class="t" style="left:471.6px;top:735.2px;font-size:12.2px;font-weight:bold;color:#242424">account</div>
  <div class="t" style="left:599px;top:719.1px;font-size:12.2px;font-weight:bold;color:#242424">Offset</div>
  <div class="t" style="left:599px;top:735.2px;font-size:12.2px;font-weight:bold;color:#242424">account</div>
  <div class="t" style="left:726.6px;top:727.1px;font-size:12.2px;font-weight:bold;color:#242424">Amount</div>
  <div class="t" style="left:852.3px;top:727.1px;font-size:12.2px;font-weight:bold;color:#242424">Currency</div>
  <div class="t" style="left:951.4px;top:719.1px;font-size:12.2px;font-weight:bold;color:#242424">Transaction</div>
  <div class="t" style="left:951.4px;top:735.2px;font-size:12.2px;font-weight:bold;color:#242424">date</div>
  <div class="t" style="left:1078.8px;top:727.1px;font-size:12.2px;font-weight:bold;color:#242424">Value date</div>
  <div class="t" style="left:1206.7px;top:727.1px;font-size:12.2px;font-weight:bold;color:#242424">Process date</div>
  <div class="t" style="left:344.4px;top:767.3px;font-size:12.5px;color:#242424">*******0002</div>
  <div class="t" style="left:471.6px;top:767.3px;font-size:12.5px;color:#242424;transform:scaleX(0.92);transform-origin:left center">WF 2098</div>
  <div class="t" style="left:599px;top:767.3px;font-size:12.5px;color:#242424;transform:scaleX(0.92);transform-origin:left center">JPMC 2789</div>
  <div class="t" style="left:630.3px;width:200px;text-align:right;top:767.3px;font-size:12.5px;color:#242424;transform:scaleX(0.92);transform-origin:right center">400,993.21</div>
  <div class="t" style="left:852.3px;top:767.3px;font-size:12.5px;color:#242424;transform:scaleX(0.92);transform-origin:left center">USD</div>
  <div class="t" style="left:957.4px;width:100px;text-align:right;top:767.3px;font-size:12.5px;color:#242424">1/18/22</div>
  <div class="t" style="left:1084.8px;width:100px;text-align:right;top:767.3px;font-size:12.5px;color:#242424">2/12/22</div>
  <div class="a" style="left:1200px;top:764.3px;width:102px;height:20px;overflow:hidden"><div class="t" style="left:0;width:111.6px;text-align:right;top:3px;font-size:12.5px;color:#242424">2/14/22</div></div>
  <div class="t" style="left:344.4px;top:802.2px;font-size:12.5px;color:#242424">*******4719</div>
  <div class="t" style="left:471.6px;top:802.2px;font-size:12.5px;color:#242424;transform:scaleX(0.92);transform-origin:left center">JPMC 1289</div>
  <div class="t" style="left:599px;top:802.2px;font-size:12.5px;color:#242424;transform:scaleX(0.92);transform-origin:left center">JPMC 2789</div>
  <div class="t" style="left:630.3px;width:200px;text-align:right;top:802.2px;font-size:12.5px;color:#242424;transform:scaleX(0.92);transform-origin:right center">20,872.77</div>
  <div class="t" style="left:852.3px;top:802.2px;font-size:12.5px;color:#242424;transform:scaleX(0.92);transform-origin:left center">USD</div>
  <div class="t" style="left:957.4px;width:100px;text-align:right;top:802.2px;font-size:12.5px;color:#242424">1/16/22</div>
  <div class="t" style="left:1084.8px;width:100px;text-align:right;top:802.2px;font-size:12.5px;color:#242424">2/1/22</div>
  <div class="a" style="left:1200px;top:799.2px;width:102px;height:20px;overflow:hidden"><div class="t" style="left:0;width:111.6px;text-align:right;top:3px;font-size:12.5px;color:#242424">2/3/22</div></div>
  <div class="t" style="left:344.4px;top:837.6px;font-size:12.5px;color:#242424">*******1393</div>
  <div class="t" style="left:471.6px;top:837.6px;font-size:12.5px;color:#242424;transform:scaleX(0.92);transform-origin:left center">CAG 2801</div>
  <div class="t" style="left:599px;top:837.6px;font-size:12.5px;color:#242424;transform:scaleX(0.92);transform-origin:left center">JPMC 2789</div>
  <div class="t" style="left:630.3px;width:200px;text-align:right;top:837.6px;font-size:12.5px;color:#242424;transform:scaleX(0.92);transform-origin:right center">7,002,109.33</div>
  <div class="t" style="left:852.3px;top:837.6px;font-size:12.5px;color:#242424;transform:scaleX(0.92);transform-origin:left center">EUR</div>
  <div class="t" style="left:957.4px;width:100px;text-align:right;top:837.6px;font-size:12.5px;color:#242424">1/15/22</div>
  <div class="t" style="left:1084.8px;width:100px;text-align:right;top:837.6px;font-size:12.5px;color:#242424">2/1/22</div>
  <div class="a" style="left:1200px;top:834.6px;width:102px;height:20px;overflow:hidden"><div class="t" style="left:0;width:111.6px;text-align:right;top:3px;font-size:12.5px;color:#242424">2/3/22</div></div>
  <div class="t" style="left:344.4px;top:872.9px;font-size:12.5px;color:#242424">*******7163</div>
  <div class="t" style="left:471.6px;top:872.9px;font-size:12.5px;color:#242424;transform:scaleX(0.92);transform-origin:left center">CITI 0900</div>
  <div class="t" style="left:599px;top:872.9px;font-size:12.5px;color:#242424;transform:scaleX(0.92);transform-origin:left center">BOFA 2217</div>
  <div class="t" style="left:630.3px;width:200px;text-align:right;top:872.9px;font-size:12.5px;color:#242424;transform:scaleX(0.92);transform-origin:right center">1,298,826.33</div>
  <div class="t" style="left:852.3px;top:872.9px;font-size:12.5px;color:#242424;transform:scaleX(0.92);transform-origin:left center">EUR</div>
  <div class="t" style="left:957.4px;width:100px;text-align:right;top:872.9px;font-size:12.5px;color:#242424">1/14/22</div>
  <div class="t" style="left:1084.8px;width:100px;text-align:right;top:872.9px;font-size:12.5px;color:#242424">1/14/22</div>
  <div class="a" style="left:1200px;top:869.9px;width:102px;height:20px;overflow:hidden"><div class="t" style="left:0;width:111.6px;text-align:right;top:3px;font-size:12.5px;color:#242424">1/19/22</div></div>
  <svg style="left:0;top:0" width="1400" height="900" viewBox="0 0 1400 900">
    <rect x="204" y="725.4" width="13" height="13" rx="1.5" fill="#fff" stroke="#c8c8c8" stroke-width="1"/>
    <path d="M207.5 731.9 H213.5" stroke="#0f6cbd" stroke-width="1.2"/>
    <circle cx="449.3" cy="727.0" r="1.25" fill="#444"/>
    <circle cx="449.3" cy="732.2" r="1.25" fill="#444"/>
    <circle cx="449.3" cy="737.4" r="1.25" fill="#444"/>
    <circle cx="576.6" cy="727.0" r="1.25" fill="#444"/>
    <circle cx="576.6" cy="732.2" r="1.25" fill="#444"/>
    <circle cx="576.6" cy="737.4" r="1.25" fill="#444"/>
    <circle cx="704.9" cy="727.0" r="1.25" fill="#444"/>
    <circle cx="704.9" cy="732.2" r="1.25" fill="#444"/>
    <circle cx="704.9" cy="737.4" r="1.25" fill="#444"/>
    <circle cx="830.3" cy="727.0" r="1.25" fill="#444"/>
    <circle cx="830.3" cy="732.2" r="1.25" fill="#444"/>
    <circle cx="830.3" cy="737.4" r="1.25" fill="#444"/>
    <circle cx="929.3" cy="727.0" r="1.25" fill="#444"/>
    <circle cx="929.3" cy="732.2" r="1.25" fill="#444"/>
    <circle cx="929.3" cy="737.4" r="1.25" fill="#444"/>
    <circle cx="1056.8" cy="727.0" r="1.25" fill="#444"/>
    <circle cx="1056.8" cy="732.2" r="1.25" fill="#444"/>
    <circle cx="1056.8" cy="737.4" r="1.25" fill="#444"/>
    <circle cx="1184.2" cy="727.0" r="1.25" fill="#444"/>
    <circle cx="1184.2" cy="732.2" r="1.25" fill="#444"/>
    <circle cx="1184.2" cy="737.4" r="1.25" fill="#444"/>
    <path d="M1031 727 V737.5 M1027.3 733.8 L1031 737.5 L1034.7 733.8" fill="none" stroke="#1c6ab5" stroke-width="1.1"/>
    <rect x="203.5" y="764.7" width="14" height="14" rx="1.8" fill="#0f6cbd"/>
    <path d="M206.3 771.5 L210 775.0 L215 769.7" fill="none" stroke="#fff" stroke-width="1"/>
    <path d="M235.6 778.6 L236.4 774.8 L244.6 766.6 L247.6 769.6 L239.4 777.8 Z" fill="#3d3d3d"/>
    <path d="M245.4 765.8 L246.3 764.9 Q246.8 764.5 247.3 764.9 L249.2 766.8 Q249.6 767.3 249.2 767.8 L248.4 768.8 Z" fill="#3d3d3d"/>
    <path d="M261.1 776.7 V766.1 Q261.1 765.3 261.9 765.3 H270" fill="none" stroke="#888" stroke-width="1"/>
    <rect x="262.6" y="767.1" width="8.6" height="10.8" rx="1.2" fill="#3d3d3d"/>
    <circle cx="291" cy="771.7" r="6.4" fill="#3d3d3d"/>
    <path d="M288 771.7 L290.2 773.9 L294.3 769.3" fill="none" stroke="#fff" stroke-width="1.3"/>
    <circle cx="316" cy="771.7" r="6.4" fill="#3d3d3d"/>
    <path d="M313.3 769.0 L318.7 774.4 M318.7 769.0 L313.3 774.4" fill="none" stroke="#fff" stroke-width="1.3"/>
    <rect x="203.5" y="799.6" width="14" height="14" rx="1.8" fill="#0f6cbd"/>
    <path d="M206.3 806.4 L210 809.9 L215 804.6" fill="none" stroke="#fff" stroke-width="1"/>
    <path d="M235.6 813.5 L236.4 809.7 L244.6 801.5 L247.6 804.5 L239.4 812.7 Z" fill="#3d3d3d"/>
    <path d="M245.4 800.7 L246.3 799.8 Q246.8 799.4 247.3 799.8 L249.2 801.7 Q249.6 802.2 249.2 802.7 L248.4 803.7 Z" fill="#3d3d3d"/>
    <path d="M261.1 811.6 V801.0 Q261.1 800.2 261.9 800.2 H270" fill="none" stroke="#888" stroke-width="1"/>
    <rect x="262.6" y="802.0" width="8.6" height="10.8" rx="1.2" fill="#3d3d3d"/>
    <circle cx="291" cy="806.6" r="6.4" fill="#3d3d3d"/>
    <path d="M288 806.6 L290.2 808.8 L294.3 804.2" fill="none" stroke="#fff" stroke-width="1.3"/>
    <circle cx="316" cy="806.6" r="6.4" fill="#3d3d3d"/>
    <path d="M313.3 803.9 L318.7 809.3 M318.7 803.9 L313.3 809.3" fill="none" stroke="#fff" stroke-width="1.3"/>
    <rect x="204" y="835.5" width="13" height="13" rx="1.5" fill="#fff" stroke="#d0d0d0" stroke-width="1"/>
    <path d="M235.6 848.9 L236.4 845.1 L244.6 836.9 L247.6 839.9 L239.4 848.1 Z" fill="#3d3d3d"/>
    <path d="M245.4 836.1 L246.3 835.2 Q246.8 834.8 247.3 835.2 L249.2 837.1 Q249.6 837.6 249.2 838.1 L248.4 839.1 Z" fill="#3d3d3d"/>
    <path d="M261.1 847.0 V836.4 Q261.1 835.6 261.9 835.6 H270" fill="none" stroke="#888" stroke-width="1"/>
    <rect x="262.6" y="837.4" width="8.6" height="10.8" rx="1.2" fill="#3d3d3d"/>
    <circle cx="291" cy="842.0" r="6.4" fill="#3d3d3d"/>
    <path d="M288 842.0 L290.2 844.2 L294.3 839.6" fill="none" stroke="#fff" stroke-width="1.3"/>
    <circle cx="316" cy="842.0" r="6.4" fill="#3d3d3d"/>
    <path d="M313.3 839.3 L318.7 844.7 M318.7 839.3 L313.3 844.7" fill="none" stroke="#fff" stroke-width="1.3"/>
    <rect x="204" y="870.8" width="13" height="13" rx="1.5" fill="#fff" stroke="#d0d0d0" stroke-width="1"/>
    <path d="M235.6 884.2 L236.4 880.4 L244.6 872.2 L247.6 875.2 L239.4 883.4 Z" fill="#3d3d3d"/>
    <path d="M245.4 871.4 L246.3 870.5 Q246.8 870.1 247.3 870.5 L249.2 872.4 Q249.6 872.9 249.2 873.4 L248.4 874.4 Z" fill="#3d3d3d"/>
    <path d="M261.1 882.3 V871.7 Q261.1 870.9 261.9 870.9 H270" fill="none" stroke="#888" stroke-width="1"/>
    <rect x="262.6" y="872.7" width="8.6" height="10.8" rx="1.2" fill="#3d3d3d"/>
    <circle cx="291" cy="877.3" r="6.4" fill="#3d3d3d"/>
    <path d="M288 877.3 L290.2 879.5 L294.3 874.9" fill="none" stroke="#fff" stroke-width="1.3"/>
    <circle cx="316" cy="877.3" r="6.4" fill="#3d3d3d"/>
    <path d="M313.3 874.6 L318.7 880.0 M318.7 874.6 L313.3 880.0" fill="none" stroke="#fff" stroke-width="1.3"/>
  </svg>
  <!-- TABLE_END -->


</div>
<div class="a" style="left:62.5px;top:42.5px;width:1275px;height:854px;border-radius:20px;border:1px solid rgba(255,255,255,0.28)"></div>
</body></html>
